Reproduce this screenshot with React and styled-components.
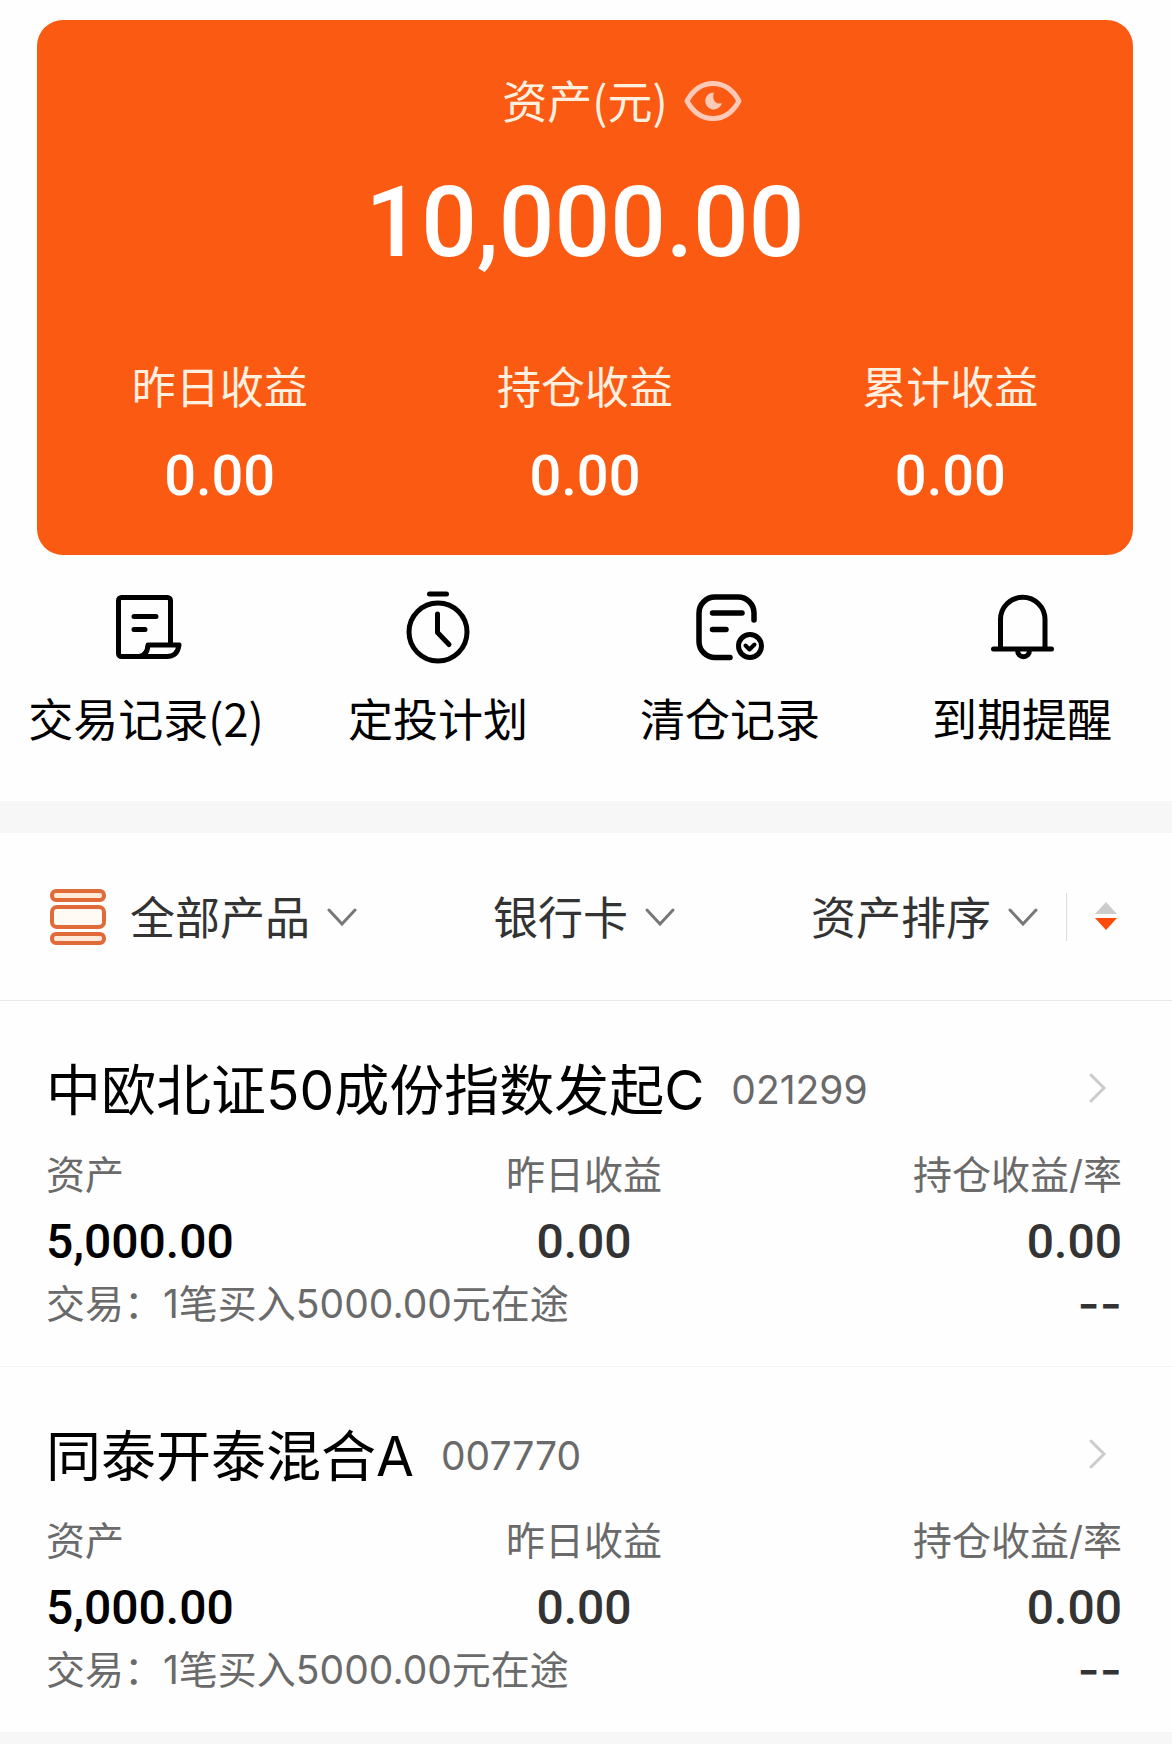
import React, { useState } from "react";
import styled, { createGlobalStyle } from "styled-components";

const sans = `"Noto Sans CJK SC", "Noto Sans", sans-serif`;
const mixed = `Inter, "Noto Sans CJK SC", sans-serif`;
const digits = `Roboto, "Noto Sans CJK SC", sans-serif`;

const GlobalStyle = createGlobalStyle`
  * { box-sizing: border-box; }
  body {
    margin: 0;
    background: #f7f7f7;
    color: #000;
    font-family: ${sans};
  }
  button, select { font: inherit; color: inherit; }
  svg { display: block; flex: none; }
`;

const Overview = styled.section`
  background: #fefefe;
  padding: 20px 39px 0 37px;
`;

const AssetCard = styled.div`
  background: #fb5a13;
  border-radius: 26px;
  padding: 50px 0 46px;
  color: #fff;
`;

const AssetTitle = styled.div`
  display: grid;
  grid-template-columns: 1fr auto 1fr;
  align-items: center;
  column-gap: 16px;
  font-size: 45px;
  line-height: 60px;
  color: #fff0e0;
`;

const AssetLabel = styled.span`
  grid-column: 2;
`;

const EyeButton = styled.button`
  justify-self: start;
  padding: 2px 0 0;
  border: 0;
  background: none;
  cursor: pointer;
`;

const AssetTotal = styled.div`
  margin-top: 33px;
  text-align: center;
  font: 500 98px/120px ${digits};
`;

const Earnings = styled.dl`
  display: grid;
  grid-template-columns: repeat(3, 1fr);
  margin: 72px 0 0;
  text-align: center;

  dt {
    font-size: 44px;
    line-height: 60px;
    color: #fff0e0;
  }
  dd {
    margin: 28px 0 0;
    font: 500 56px/66px ${digits};
  }
`;

const Actions = styled.nav`
  display: grid;
  grid-template-columns: repeat(4, 1fr);
  background: #fefefe;
  padding: 33px 4px 53px 0;
`;

const ActionButton = styled.button`
  display: flex;
  flex-direction: column;
  align-items: center;
  gap: 20px;
  padding: 0;
  border: 0;
  background: none;
  font-size: 45px;
  line-height: 60px;
  white-space: nowrap;
  cursor: pointer;
`;

const Filters = styled.div`
  display: flex;
  justify-content: space-between;
  align-items: center;
  height: 168px;
  margin-top: 32px;
  padding: 0 55px 0 50px;
  background: #fefefe;
  border-bottom: 1px solid #e9e9e9;
  color: #333;
`;

const FilterGroup = styled.div`
  display: flex;
  align-items: center;
  gap: ${(p) => p.$gap}px;
`;

const Picker = styled.label`
  display: grid;
  align-items: center;

  select, svg { grid-area: 1 / 1; }
  svg { justify-self: end; pointer-events: none; }
`;

const PickerSelect = styled.select`
  appearance: none;
  border: 0;
  margin: 0;
  padding: 0 46px 2px 0;
  background: none;
  font-size: 45px;
  line-height: 60px;
  cursor: pointer;
`;

const Divider = styled.span`
  width: 1px;
  height: 48px;
  background: #ddd;
`;

const SortButton = styled.button`
  padding: 0 0 2px;
  border: 0;
  background: none;
  cursor: pointer;
`;

const Fund = styled.article`
  background: #fefefe;
  padding: 49px 50px 35px 46px;
  border-bottom: 1px solid #f5f5f5;
  font-family: ${mixed};
`;

const FundLink = styled.a`
  display: flex;
  align-items: center;
  color: inherit;
  text-decoration: none;
  padding-right: 15px;

  svg { margin-left: auto; }
`;

const FundName = styled.h2`
  margin: 0;
  padding-top: 4px;
  font-size: 55px;
  font-weight: 400;
  line-height: 72px;
`;

const FundCode = styled.span`
  margin-left: 27px;
  padding-top: 4px;
  font-size: 39px;
  line-height: 60px;
  color: #6a6a6a;
`;

const Metrics = styled.dl`
  display: grid;
  grid-template-columns: repeat(3, 1fr);
  margin: 22px 0 0;
`;

const Metric = styled.div`
  text-align: ${(p) => p.$align};
  color: ${(p) => (p.$strong ? "#000" : "#333")};

  dt {
    font-size: 39px;
    line-height: 54px;
    color: #6a6a6a;
  }
  dd {
    margin: 7px 0 0;
    font: 500 48px/66px ${digits};
  }
`;

const Pending = styled.div`
  display: flex;
  justify-content: space-between;
  margin-top: 2px;
  font-size: 39px;
  line-height: 54px;
  color: #6a6a6a;
`;

const Rate = styled.span`
  font: 500 48px/54px Inter, sans-serif;
  color: #333;
`;

const Icon = ({ children }) => (
  <svg width="80" height="80" viewBox="0 0 80 80" fill="none" stroke="#000" strokeWidth="5" strokeLinecap="round" strokeLinejoin="round" aria-hidden="true">
    {children}
  </svg>
);

const TradeIcon = () => (
  <Icon>
    <path d="M64.5 56V12.5a3 3 0 0 0-3-3h-46a3 3 0 0 0-3 3v53a3 3 0 0 0 3 3H61c7 0 11-4 12-11.500H42c-.5 7-4 11-9 11.500" />
    <path d="M28 28.500h22M28 41.500h11" />
  </Icon>
);

const PlanIcon = () => (
  <Icon>
    <circle cx="40" cy="44" r="29" />
    <path d="M31.500 6h17M39.500 26v18.500L51 56.500" />
  </Icon>
);

const ClearedIcon = () => (
  <Icon>
    <path d="M64 32V25a16 16 0 0 0-16-16H25A16 16 0 0 0 9 25v28.500a16 16 0 0 0 16 16h15M22.500 25H52M22.500 41.500H36" strokeWidth="5.500" />
    <circle cx="60" cy="58" r="11.500" />
    <path d="M55.500 57.500l4 4 5-5" strokeWidth="4" />
  </Icon>
);

const BellIcon = () => (
  <Icon>
    <path d="M18.500 60V31.500a22.250 22.250 0 0 1 44.500 0V60M11.500 61h58" />
    <path d="M35.500 62c0 9 12 9 12 0" />
  </Icon>
);

const EyeIcon = () => (
  <svg width="58" height="42" viewBox="0 0 58 42" fill="none" aria-hidden="true">
    <path d="M3 21C9 10 18 3.500 29 3.500S49 10 55 21C49 32 40 38.500 29 38.500S9 32 3 21z" stroke="#ffc9b8" strokeWidth="5" strokeLinejoin="round" />
    <path d="M30 12.500a8.500 8.500 0 1 0 8 10.500c-5 2.500-11-3-8-10.500z" fill="#ffc9b8" />
  </svg>
);

const ProductsIcon = () => (
  <svg width="56" height="56" viewBox="0 0 56 56" fill="#ffe9d8" stroke="#e06a38" strokeWidth="4" aria-hidden="true">
    <rect x="2" y="2" width="52" height="9" rx="4" />
    <rect x="2" y="18" width="52" height="20" rx="5" fill="#fffaf4" />
    <rect x="2" y="45" width="52" height="9" rx="4" />
  </svg>
);

const ChevronDown = () => (
  <svg width="30" height="18" viewBox="0 0 30 18" fill="none" stroke="#777" strokeWidth="3" strokeLinecap="round" aria-hidden="true">
    <path d="M2 2l13 14L28 2" />
  </svg>
);

const ChevronRight = () => (
  <svg width="18" height="30" viewBox="0 0 18 30" fill="none" stroke="#ccc" strokeWidth="3" strokeLinecap="round" aria-hidden="true">
    <path d="M2 2l13 13L2 28" />
  </svg>
);

const SortIcon = () => (
  <svg width="22" height="30" viewBox="0 0 22 30" aria-hidden="true">
    <path d="M11 1l11 12H0z" fill="#ccc" />
    <path d="M11 29l11-12H0z" fill="#fb4a0c" />
  </svg>
);

const earnings = [
  ["昨日收益", "0.00"],
  ["持仓收益", "0.00"],
  ["累计收益", "0.00"],
];

const actions = [
  ["交易记录(2)", TradeIcon],
  ["定投计划", PlanIcon],
  ["清仓记录", ClearedIcon],
  ["到期提醒", BellIcon],
];

const funds = [
  { name: "中欧北证50成份指数发起C", code: "021299" },
  { name: "同泰开泰混合A", code: "007770" },
];

function FilterPicker({ label }) {
  return (
    <Picker>
      <PickerSelect aria-label={label}>
        <option>{label}</option>
      </PickerSelect>
      <ChevronDown />
    </Picker>
  );
}

function FundItem({ name, code }) {
  return (
    <Fund>
      <FundLink href={`#${code}`}>
        <FundName>{name}</FundName>
        <FundCode>{code}</FundCode>
        <ChevronRight />
      </FundLink>
      <Metrics>
        <Metric $align="left" $strong>
          <dt>资产</dt>
          <dd>5,000.00</dd>
        </Metric>
        <Metric $align="center">
          <dt>昨日收益</dt>
          <dd>0.00</dd>
        </Metric>
        <Metric $align="right">
          <dt>持仓收益/率</dt>
          <dd>0.00</dd>
        </Metric>
      </Metrics>
      <Pending>
        <span>交易：1笔买入5000.00元在途</span>
        <Rate>--</Rate>
      </Pending>
    </Fund>
  );
}

export default function App() {
  const [visible, setVisible] = useState(true);
  const show = (value) => (visible ? value : "****");

  return (
    <main lang="zh-CN">
      <GlobalStyle />
      <Overview>
        <AssetCard>
          <AssetTitle>
            <AssetLabel>资产(元)</AssetLabel>
            <EyeButton type="button" aria-label="显示或隐藏资产" onClick={() => setVisible(!visible)}>
              <EyeIcon />
            </EyeButton>
          </AssetTitle>
          <AssetTotal>{show("10,000.00")}</AssetTotal>
          <Earnings>
            {earnings.map(([label, value]) => (
              <div key={label}>
                <dt>{label}</dt>
                <dd>{show(value)}</dd>
              </div>
            ))}
          </Earnings>
        </AssetCard>
      </Overview>
      <Actions>
        {actions.map(([label, Glyph]) => (
          <ActionButton type="button" key={label}>
            <Glyph />
            {label}
          </ActionButton>
        ))}
      </Actions>
      <Filters>
        <FilterGroup $gap={24}>
          <ProductsIcon />
          <FilterPicker label="全部产品" />
        </FilterGroup>
        <FilterPicker label="银行卡" />
        <FilterGroup $gap={28}>
          <FilterPicker label="资产排序" />
          <Divider />
          <SortButton type="button" aria-label="切换排序方向">
            <SortIcon />
          </SortButton>
        </FilterGroup>
      </Filters>
      {funds.map((fund) => (
        <FundItem key={fund.code} {...fund} />
      ))}
    </main>
  );
}
